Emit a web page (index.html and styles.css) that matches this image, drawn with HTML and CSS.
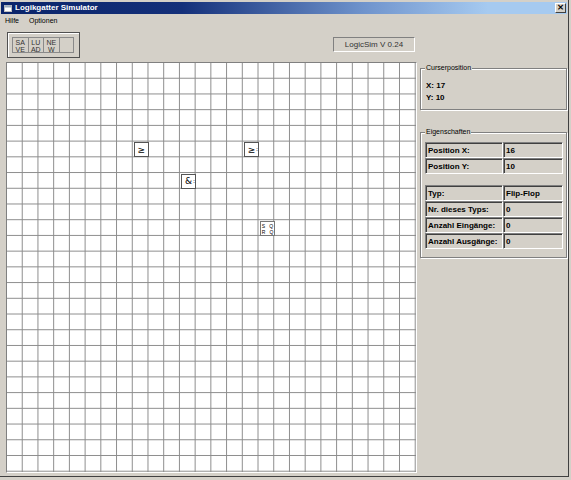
FILE: index.html
```html
<!DOCTYPE html>
<html>
<head>
<meta charset="utf-8">
<title>Logikgatter Simulator</title>
<link rel="stylesheet" href="styles.css">
</head>
<body>
<div class="window">
  <div class="titlebar">
    <svg class="app-icon" width="8" height="7" viewBox="0 0 8 7"><rect x="0.5" y="0.5" width="7" height="6" fill="#fff" stroke="#c0c0c0"/><rect x="0.5" y="0.5" width="7" height="2" fill="#9ab"/></svg>
    <span class="title">Logikgatter Simulator</span>
    <span class="close">×</span>
  </div>
  <div class="menubar">
    <span class="menu-item">Hilfe</span>
    <span class="menu-item">Optionen</span>
  </div>
  <div class="main">
    <div class="left">
      <div class="toolrow">
        <div class="toolbox">
          <div class="btn">SA<br>VE</div>
          <div class="btn">LU<br>AD</div>
          <div class="btn">NE<br>W</div>
          <div class="btn"></div>
        </div>
        <div class="version">LogicSim V 0.24</div>
      </div>
      <div class="grid">
        <div class="gate" style="--c:8;--r:5"><span class="sym">≥</span></div>
        <div class="gate" style="--c:15;--r:5"><span class="sym">≥</span><span class="pin">:</span></div>
        <div class="gate" style="--c:11;--r:7"><span class="sym">&amp;</span><span class="pin">:</span></div>
        <div class="gate ff" style="--c:16;--r:10"><span class="ff-row">S&nbsp;&nbsp;&nbsp;Q</span><span class="ff-row">R&nbsp;&nbsp;&nbsp;Q</span></div>
      </div>
    </div>
    <div class="right">
      <div class="group cursor">
        <span class="legend">Curserposition</span>
        <div class="coord">X: 17</div>
        <div class="coord">Y: 10</div>
      </div>
      <div class="group props">
        <span class="legend">Eigenschaften</span>
        <div class="table">
          <div class="cell">Position X:</div><div class="cell">16</div>
          <div class="cell">Position Y:</div><div class="cell">10</div>
        </div>
        <div class="table second">
          <div class="cell">Typ:</div><div class="cell">Flip-Flop</div>
          <div class="cell">Nr. dieses Typs:</div><div class="cell">0</div>
          <div class="cell">Anzahl Eingänge:</div><div class="cell">0</div>
          <div class="cell">Anzahl Ausgänge:</div><div class="cell">0</div>
        </div>
      </div>
    </div>
  </div>
</div>
</body>
</html>
```
FILE: styles.css
```css
* { box-sizing: border-box; }
html, body { margin: 0; padding: 0; }
body {
  width: 571px;
  height: 480px;
  background: #d4d0c8;
  font-family: "Liberation Sans", Arial, sans-serif;
  font-size: 8px;
  color: #000;
  overflow: hidden;
}
.window {
  width: 569px;
  height: 477px;
  border-right: 1px solid #404040;
  border-bottom: 1px solid #404040;
  display: flex;
  flex-direction: column;
}
.titlebar {
  height: 12px;
  margin: 2px 1px 0 1px;
  padding-left: 3px;
  display: flex;
  align-items: center;
  background: linear-gradient(to right, #0a246a 0%, #14307a 32%, #6f93cc 64%, #a6caf0 86%, #a6caf0 100%);
}
.app-icon { display: block; margin-right: 3px; }
.title {
  color: #fff;
  font-weight: bold;
  font-size: 8px;
  line-height: 12px;
}
.close {
  margin-left: auto;
  margin-right: 1px;
  width: 11px;
  height: 10px;
  background: #d4d0c8;
  border: 1px solid;
  border-color: #fff #404040 #404040 #fff;
  font-family: "DejaVu Sans", sans-serif;
  font-size: 9px;
  line-height: 7px;
  text-align: center;
  font-weight: bold;
}
.menubar {
  height: 12px;
  display: flex;
  align-items: center;
  padding-left: 5px;
  gap: 10px;
  font-size: 7px;
}
.main {
  display: flex;
  gap: 3px;
}
.left {
  padding-left: 6px;
  display: flex;
  flex-direction: column;
}
.toolrow {
  margin-top: 6px;
  display: flex;
  align-items: flex-start;
  width: 411px;
}
.toolbox {
  margin-left: 1px;
  width: 73px;
  height: 26px;
  border: 1px solid #505050;
  box-shadow: inset 1px 1px #fff;
  padding: 4px 0 0 4px;
  display: flex;
}
.btn {
  width: 15.5px;
  height: 16px;
  border: 1px solid #8a8a8a;
  border-right-width: 0;
  font-size: 7px;
  line-height: 7px;
  color: #333;
  text-align: center;
  padding-top: 1px;
}
.btn:last-child { border-right-width: 1px; }
.version {
  margin-left: auto;
  margin-right: 2px;
  margin-top: 5px;
  width: 82px;
  height: 15px;
  border: 1px solid;
  border-color: #808080 #fff #fff #808080;
  text-align: center;
  line-height: 13px;
  font-size: 8px;
  color: #333;
}
.grid {
  position: relative;
  margin-top: 4px;
  width: 411px;
  height: 411px;
  border: 1px solid;
  border-color: #808080 #fff #fff #808080;
  background-color: #fff;
  background-image:
    linear-gradient(to right, transparent 14.73px, #8c8c8c 14.73px),
    linear-gradient(to bottom, transparent 14.73px, #8c8c8c 14.73px);
  background-size: 15.73px 15.73px;
}
.gate {
  position: absolute;
  left: calc(var(--c) * 15.73px + 1px);
  top: calc(var(--r) * 15.73px + 0.5px);
  width: 15px;
  height: 15px;
  background: #fff;
  border: 1px solid #555;
  display: flex;
  align-items: center;
  justify-content: center;
  font-family: "DejaVu Sans", sans-serif;
  font-size: 9px;
  color: #000;
}
.gate .pin {
  position: absolute;
  right: 0;
  top: 3px;
  font-size: 6px;
  line-height: 6px;
}
.gate.ff {
  display: block;
  padding: 1px 0 0 1px;
  font-family: "Liberation Sans", Arial, sans-serif;
  font-size: 5px;
  line-height: 6px;
  border-color: #777;
}
.ff-row {
  display: block;
  white-space: nowrap;
}
.right {
  display: flex;
  flex-direction: column;
}
.group {
  position: relative;
  width: 147px;
  border: 1px solid #808080;
  box-shadow: inset 1px 1px #fff, 1px 1px #fff;
}
.legend {
  position: absolute;
  top: -5px;
  left: 4px;
  padding: 0 1px;
  background: #d4d0c8;
  font-size: 7px;
  line-height: 8px;
}
.cursor {
  margin-top: 42px;
  height: 42px;
  padding: 11px 0 0 5px;
}
.coord {
  font-weight: bold;
  font-size: 8px;
  line-height: 12px;
}
.props {
  margin-top: 22px;
  height: 126px;
  padding: 9px 0 0 4px;
}
.table {
  display: grid;
  grid-template-columns: 78px 60px;
  grid-auto-rows: 16px;
}
.table.second { margin-top: 11px; }
.cell {
  border: 1px solid;
  border-color: #808080 #fff #fff #808080;
  box-shadow: inset 1px 1px #404040;
  padding: 3px 0 0 2px;
  font-weight: bold;
  font-size: 8px;
  line-height: 10px;
  white-space: nowrap;
}
```
